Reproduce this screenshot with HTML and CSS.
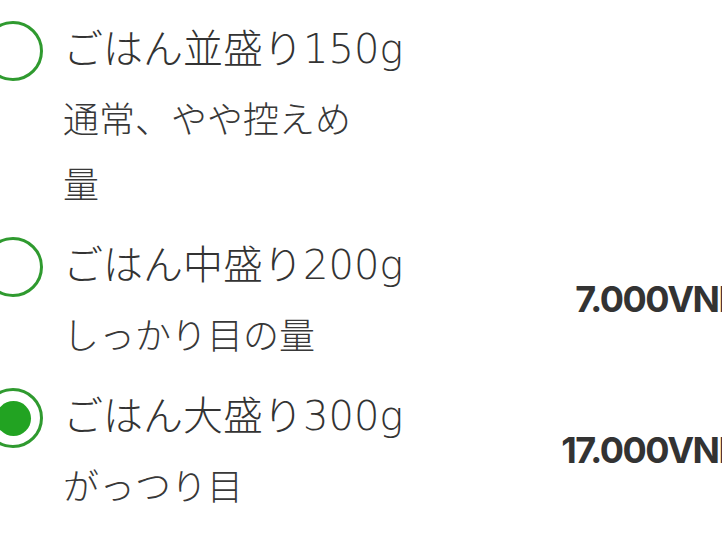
FILE: index.html
```html
<!DOCTYPE html>
<html lang="ja">
<head>
<meta charset="utf-8">
<link rel="stylesheet" href="styles.css">
</head>
<body>
<div class="list">
  <div class="row">
    <span class="radio"></span>
    <div class="text">
      <div class="title">ごはん並盛り150g</div>
      <div class="sub">通常、やや控えめ量</div>
    </div>
    <div class="price"></div>
  </div>
  <div class="row">
    <span class="radio"></span>
    <div class="text">
      <div class="title">ごはん中盛り200g</div>
      <div class="sub">しっかり目の量</div>
    </div>
    <div class="price">7.000VND</div>
  </div>
  <div class="row">
    <span class="radio checked"></span>
    <div class="text">
      <div class="title">ごはん大盛り300g</div>
      <div class="sub">がっつり目</div>
    </div>
    <div class="price">17.000VND</div>
  </div>
</div>
</body>
</html>
```
FILE: styles.css
```css
html, body {
  margin: 0;
  padding: 0;
  background: #ffffff;
  overflow: hidden;
}
body {
  width: 722px;
  height: 542px;
  font-family: "Noto Sans CJK JP", "Noto Sans", sans-serif;
  color: #333333;
}
.list {
  margin-left: -17px;
  width: 760px;
  padding-top: 14px;
  display: flex;
  flex-direction: column;
  gap: 15px;
}
.row {
  display: flex;
  align-items: flex-start;
}
.radio {
  flex: 0 0 auto;
  width: 60px;
  height: 60px;
  box-sizing: border-box;
  border: 3.5px solid #2f9a2f;
  border-radius: 50%;
  margin-top: 7px;
  display: flex;
  align-items: center;
  justify-content: center;
}
.radio.checked::after {
  content: "";
  width: 35px;
  height: 35px;
  border-radius: 50%;
  background: #22a322;
}
.text {
  margin-left: 20px;
  flex: 1 1 auto;
}
.title {
  font-family: "DejaVu Sans", "Noto Sans CJK JP", sans-serif;
  font-size: 40px;
  line-height: 70px;
  font-weight: 200;
  white-space: nowrap;
  color: #333333;
}
.sub {
  font-size: 36px;
  line-height: 65px;
  font-weight: 300;
  max-width: 300px;
  color: #383838;
  margin-top: 1px;
}
.price {
  align-self: center;
  margin-top: 2px;
  font-family: Inter, "Noto Sans", sans-serif;
  font-weight: 700;
  font-size: 36px;
  letter-spacing: -1.5px;
  color: #333333;
  white-space: nowrap;
}
```
